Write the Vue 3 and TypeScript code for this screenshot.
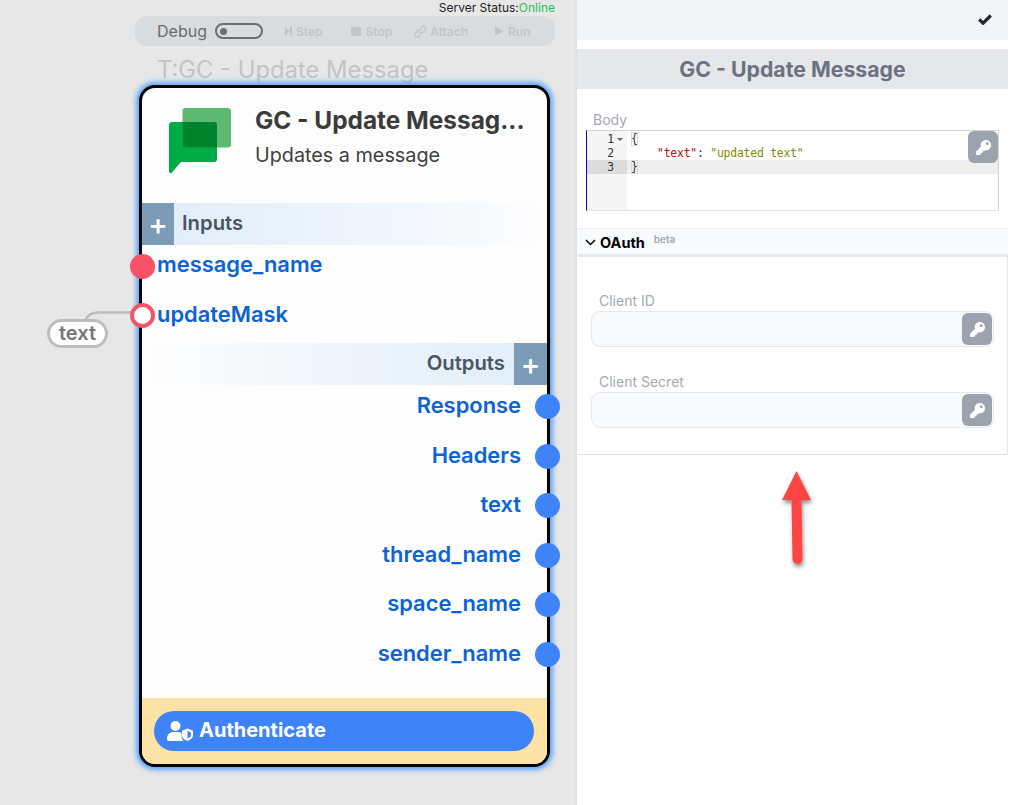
<template>
  <div class="page">
    <div class="canvas">
      <div class="server-status">Server Status:<span class="online">Online</span></div>
      <div class="toolbar">
        <span class="debug-label">Debug</span>
        <span class="toggle"><i></i></span>
        <span class="tool step">
          <svg width="7" height="9" viewBox="0 0 7 9"><path d="M0 0l4.500 4.500L0 9z" fill="currentColor" /><path d="M5 0h2v9H5z" fill="currentColor" /></svg>
          Step
        </span>
        <span class="tool stop">
          <svg width="10" height="9" viewBox="0 0 10 9"><rect width="10" height="9" rx="1" fill="currentColor" /></svg>
          Stop
        </span>
        <span class="tool attach">
          <svg width="13" height="13" viewBox="0 0 13 13" fill="none" stroke="currentColor" stroke-width="1.4">
            <path d="M5.500 7.500a2.300 2.300 0 0 0 3.300 0l2.400-2.400a2.300 2.300 0 0 0-3.300-3.300L6.800 2.900" />
            <path d="M7.500 5.500a2.300 2.300 0 0 0-3.300 0L1.800 7.900a2.300 2.300 0 0 0 3.300 3.300l1.100-1.100" />
          </svg>
          Attach
        </span>
        <span class="tool run">
          <svg width="9" height="10" viewBox="0 0 9 10"><path d="M0 0l8.500 5L0 10z" fill="currentColor" /></svg>
          Run
        </span>
      </div>
      <div class="trace-title">T:GC - Update Message</div>

      <div class="ext-input">
        <svg class="wire" width="46" height="12" viewBox="0 0 46 12" fill="none">
          <path d="M0 11 C3 6 7 3.500 13 3.500 L46 3.500" stroke="#bdbdbd" stroke-width="2.500" />
        </svg>
        <span class="pill">text</span>
      </div>

      <div class="node">
        <div class="node-head">
          <svg class="chat-logo" width="62" height="66" viewBox="0 0 62 66">
            <path d="M0 17a3 3 0 0 1 3-3h42a3 3 0 0 1 3 3v34a3 3 0 0 1-3 3H12L3 64.500c-1.500 1.500-3 .5-3-1.500z" fill="#00ac47" />
            <path d="M13.500 3a3 3 0 0 1 3-3H59a3 3 0 0 1 3 3v33.500a3 3 0 0 1-3 3H16.500a3 3 0 0 1-3-3z" fill="#5bb974" />
            <path d="M13.500 14H45a3 3 0 0 1 3 3v22.500H16.500a3 3 0 0 1-3-3z" fill="#00832d" />
          </svg>
          <div class="head-text">
            <div class="node-title">GC - Update Messag...</div>
            <div class="node-sub">Updates a message</div>
          </div>
        </div>

        <div class="band band-in">
          <span class="plus">+</span>
          <span class="band-label">Inputs</span>
        </div>
        <div class="inputs">
          <div v-for="inp in inputs" :key="inp.name" class="port-row">
            <span class="dot-in" :class="{ hollow: inp.connected }"></span>
            <span class="port-name">{{ inp.name }}</span>
          </div>
        </div>

        <div class="band band-out">
          <span class="band-label">Outputs</span>
          <span class="plus">+</span>
        </div>
        <div class="outputs">
          <div v-for="out in outputs" :key="out" class="port-row out">
            <span class="port-name">{{ out }}</span>
            <span class="dot-out"></span>
          </div>
        </div>

        <div class="node-foot">
          <button class="auth-btn">
            <svg width="26" height="20" viewBox="0 0 26 20">
              <circle cx="8.500" cy="5" r="5" fill="#fff" />
              <path d="M0 18c0-4.500 2.800-7 6.500-7h4c1.700 0 3.100.4 4.200 1.200v3.300c0 1.600.7 3.300 1.800 4.400H1.500C.6 19.900 0 19.200 0 18z" fill="#fff" />
              <path d="M20.500 7.500l5.500 2.200v4.800c0 2.600-2.500 4.500-5.500 5.400-3-.9-5.500-2.800-5.500-5.400V9.700z" fill="#fff" />
              <path d="M20.500 10l3.300 1.300v3.200c0 1.400-1.500 2.500-3.300 3.100z" fill="#3f83f8" />
            </svg>
            <span class="auth-label">Authenticate</span>
          </button>
        </div>
      </div>
    </div>

    <div class="panel">
      <div class="panel-top">
        <svg width="14" height="11" viewBox="0 0 14 11"><path d="M1.200 5.300l3.900 3.900L12.800 1.500" fill="none" stroke="#1f2937" stroke-width="3.200" /></svg>
      </div>
      <div class="panel-title">GC - Update Message</div>

      <div class="body-field">
        <div class="field-label">Body</div>
        <div class="editor">
          <div class="gutter">
            <div v-for="n in 3" :key="n" class="gutter-line" :class="{ active: n === 3 }">
              {{ n }}<span v-if="n === 1" class="fold"></span>
            </div>
          </div>
          <div class="code">
            <div class="code-line"><span class="brace">{</span></div>
            <div class="code-line indent"><span class="key">"text"</span>: <span class="str">"updated text"</span></div>
            <div class="code-line active"><span class="brace">}</span></div>
          </div>
          <span class="key-btn on-editor">
            <svg width="15" height="15" viewBox="0 0 512 512"><use href="#key-shape" /></svg>
          </span>
        </div>
      </div>

      <div class="oauth-head">
        <svg width="11" height="7" viewBox="0 0 11 7"><path d="M1 1l4.500 4.500L10 1" fill="none" stroke="#000" stroke-width="1.500" /></svg>
        <span class="oauth-label">OAuth</span>
        <sup class="beta">beta</sup>
      </div>

      <div class="oauth-body">
        <div v-for="f in oauthFields" :key="f" class="oauth-field">
          <div class="field-label">{{ f }}</div>
          <div class="oauth-input">
            <span class="key-btn">
              <svg width="15" height="15" viewBox="0 0 512 512"><use href="#key-shape" /></svg>
            </span>
          </div>
        </div>
      </div>

      <div class="arrow-wrap">
        <svg width="44" height="112" viewBox="0 0 44 112">
          <defs>
            <filter id="arrow-shadow" x="-30%" y="-10%" width="160%" height="125%">
              <feDropShadow dx="1" dy="3" stdDeviation="2" flood-color="#000" flood-opacity="0.45" />
            </filter>
          </defs>
          <path d="M21.500 3L36 32H26.500L27.500 91a5 5 0 0 1-10 0L16.500 32H7z" fill="#fd4444" filter="url(#arrow-shadow)" />
        </svg>
      </div>
    </div>

    <svg width="0" height="0" class="defs">
      <defs>
        <path id="key-shape" fill="#fff" d="M512 176c0 97.200-78.800 176-176 176-11.200 0-22.200-1.100-32.800-3.100l-24 27A24 24 0 0 1 261.200 384H224v40c0 13.300-10.700 24-24 24h-40v40c0 13.300-10.700 24-24 24H24c-13.300 0-24-10.700-24-24v-78c0-6.400 2.500-12.500 7-17l161.800-161.800C163.100 213.800 160 195.300 160 176 160 78.800 238.800 0 336 0c97.500 0 176 78.500 176 176zM336 128c0 26.500 21.500 48 48 48s48-21.500 48-48-21.500-48-48-48-48 21.500-48 48z" fill-rule="evenodd" />
      </defs>
    </svg>
  </div>
</template>

<script setup lang="ts">
const inputs = [
  { name: "message_name", connected: false },
  { name: "updateMask", connected: true },
]
const outputs = ["Response", "Headers", "text", "thread_name", "space_name", "sender_name"]
const oauthFields = ["Client ID", "Client Secret"]
</script>

<style>
html,
body {
  margin: 0;
  background: #fff;
}
</style>

<style scoped>
.page {
  display: flex;
  width: 1011px;
  height: 805px;
  overflow: hidden;
  font-family: Inter, "Liberation Sans", sans-serif;
}
.defs {
  position: absolute;
}
.canvas {
  position: relative;
  width: 575px;
  flex: none;
  background: #e7e7e7;
}
.server-status {
  position: absolute;
  top: 1px;
  right: 20px;
  font-size: 12px;
  line-height: 14px;
  color: #222;
}
.online {
  color: #22c55e;
}
.toolbar {
  position: absolute;
  left: 135px;
  top: 16px;
  width: 420px;
  height: 30px;
  box-sizing: border-box;
  padding-left: 22px;
  display: flex;
  align-items: center;
  background: #d9dcdf;
  border-radius: 12px;
}
.debug-label {
  font-size: 16px;
  color: #6b6b6b;
}
.toggle {
  margin-left: 8px;
  width: 48px;
  height: 16px;
  box-sizing: border-box;
  border: 2px solid #6e6e6e;
  border-radius: 8px;
  display: flex;
  align-items: center;
  padding-left: 3px;
}
.toggle i {
  width: 7px;
  height: 7px;
  border-radius: 50%;
  background: #6e6e6e;
}
.tool {
  display: flex;
  align-items: center;
  gap: 4px;
  font-size: 12px;
  font-weight: 600;
  color: #c4c5c7;
}
.step {
  margin-left: 22px;
}
.stop {
  margin-left: 29px;
}
.attach {
  margin-left: 22px;
  gap: 3px;
}
.run {
  margin-left: 27px;
}
.trace-title {
  position: absolute;
  left: 157px;
  top: 56px;
  font-size: 23.800px;
  line-height: 27px;
  color: #c4c4c4;
}
.ext-input {
  position: absolute;
  left: 47px;
  top: 309px;
}
.wire {
  position: absolute;
  left: 38px;
  top: 0;
}
.pill {
  position: absolute;
  top: 10px;
  left: 0;
  width: 61px;
  height: 29px;
  box-sizing: border-box;
  border: 3px solid #bdbdbd;
  border-radius: 15px;
  background: #fff;
  font-size: 20px;
  font-weight: 600;
  line-height: 23px;
  text-align: center;
  color: #757575;
}
.node {
  position: absolute;
  left: 139px;
  top: 85px;
  width: 411px;
  height: 682px;
  box-sizing: border-box;
  display: flex;
  flex-direction: column;
  background: #fdfdfd;
  border: 3px solid #000;
  border-radius: 16px;
  box-shadow: 0 0 5px 2.500px #60a5fa;
}
.node-head {
  height: 115px;
  flex: none;
  display: flex;
  padding: 20px 0 0 27px;
  box-sizing: border-box;
}
.chat-logo {
  flex: none;
}
.head-text {
  margin-left: 24px;
  margin-top: -4px;
}
.node-title {
  font-size: 24.400px;
  line-height: 32px;
  font-weight: 700;
  color: #3b3b3b;
  white-space: nowrap;
}
.node-sub {
  margin-top: 7px;
  font-size: 19.800px;
  line-height: 24px;
  color: #404040;
}
.band {
  height: 42px;
  flex: none;
  display: flex;
  align-items: center;
}
.band-in {
  background: linear-gradient(90deg, #dfedf9, #f7fafd 85%, #fdfdfd);
}
.band-in .plus {
  width: 32px;
}
.band-out {
  justify-content: flex-end;
  background: linear-gradient(90deg, #fdfdfd, #dfedf9);
}
.plus {
  width: 33px;
  height: 42px;
  flex: none;
  background: #7b9bb6;
  color: #fff;
  font-size: 30px;
  line-height: 42px;
  text-align: center;
  font-weight: 500;
}
.band-label {
  margin: 0 9px 4px 8px;
  font-size: 20.300px;
  font-weight: 600;
  color: #4b5563;
}
.inputs {
  height: 98px;
  flex: none;
  box-sizing: border-box;
}
.inputs .port-row {
  top: -3.500px;
}
.port-row {
  position: relative;
  height: 49.500px;
  display: flex;
  align-items: center;
  font-size: 21.900px;
  font-weight: 600;
  color: #0b63d6;
}
.port-name {
  margin-left: 15px;
  margin-bottom: 4.500px;
}
.port-row.out {
  justify-content: flex-end;
  top: -3px;
}
.port-row.out .port-name {
  margin: 0 26px 3.500px 0;
}
.dot-in {
  position: absolute;
  left: -12.500px;
  top: 12px;
  width: 25px;
  height: 25px;
  box-sizing: border-box;
  border-radius: 50%;
  background: #f75266;
}
.dot-in.hollow {
  background: #fff;
  border: 4px solid #f75266;
}
.dot-out {
  position: absolute;
  right: -13px;
  top: 12px;
  width: 25px;
  height: 25px;
  border-radius: 50%;
  background: #3f83f8;
}
.outputs {
  flex: 1;
}
.node-foot {
  height: 66px;
  flex: none;
  display: flex;
  align-items: center;
  padding: 0 13px 0 12px;
  background: #fde4a6;
  border-radius: 0 0 13px 13px;
}
.auth-btn {
  width: 100%;
  height: 40px;
  border: 0;
  border-radius: 20px;
  background: #3f83f8;
  color: #fff;
  font: 700 20px Inter, "Liberation Sans", sans-serif;
  display: flex;
  align-items: center;
  gap: 6px;
  padding: 0 0 0 13px;
}
.auth-label {
  margin-bottom: 2px;
}
.panel {
  flex: 1;
  position: relative;
  background: #fff;
  display: flex;
  flex-direction: column;
  border-left: 2px solid #dfe2e6;
  padding-right: 3px;
}
.panel-top {
  height: 40px;
  flex: none;
  box-sizing: border-box;
  background: #f3f4f6;
  display: flex;
  align-items: center;
  justify-content: flex-end;
  padding: 0 16px 2px 0;
}
.panel-title {
  margin-top: 9px;
  height: 40px;
  flex: none;
  background: #e5e7eb;
  font-size: 21.250px;
  font-weight: 700;
  line-height: 40px;
  text-align: center;
  color: #6b7280;
}
.body-field {
  padding: 21px 9px 0 9px;
  height: 139px;
  box-sizing: border-box;
  flex: none;
}
.field-label {
  margin-left: 7px;
  font-size: 14px;
  line-height: 20px;
  color: #a3a8b3;
}
.editor {
  position: relative;
  height: 81px;
  box-sizing: border-box;
  display: flex;
  border: 1px solid #d4d4d4;
  border-left: 1px solid #0000d0;
  border-bottom-color: #e5e5e5;
  font: 11.400px/14px "DejaVu Sans Mono", monospace;
  letter-spacing: -0.2px;
  color: #333;
}
.gutter {
  width: 40px;
  flex: none;
  padding-top: 1px;
  background: #f5f5f5;
  text-align: right;
  box-sizing: border-box;
}
.gutter-line {
  position: relative;
  height: 14px;
  padding-right: 13px;
}
.gutter-line.active {
  background: #dcdcdc;
}
.fold {
  position: absolute;
  right: 4px;
  top: 6px;
  border: 3px solid transparent;
  border-top-color: #666;
  border-bottom: 0;
}
.code {
  flex: 1;
  padding-top: 1px;
}
.code-line {
  height: 14px;
  padding-left: 4px;
  white-space: pre;
}
.code-line.indent {
  padding-left: 30px;
}
.code-line.active {
  background: #efefef;
}
.brace {
  outline: 1px solid #d8d8d8;
  outline-offset: -1px;
}
.key {
  color: #c5060b;
}
.str {
  color: #7f8a00;
}
.key-btn {
  width: 30px;
  height: 32px;
  border-radius: 6px;
  background: #9ca3af;
  display: flex;
  align-items: center;
  justify-content: center;
}
.key-btn.on-editor {
  position: absolute;
  right: 0;
  top: 0;
}
.oauth-head {
  height: 26px;
  flex: none;
  box-sizing: border-box;
  display: flex;
  align-items: center;
  padding: 2px 0 0 8px;
  background: #f9fafb;
  border-top: 1px solid #f0f1f3;
}
.oauth-label {
  margin-left: 4px;
  font-size: 14.500px;
  font-weight: 700;
  color: #000;
}
.beta {
  margin: -7px 0 0 9px;
  font-size: 10px;
  font-weight: 600;
  color: #a3a8b3;
}
.oauth-body {
  height: 201px;
  flex: none;
  box-sizing: border-box;
  padding: 35px 13px 0 13px;
  border-top: 3px solid #e5e7eb;
  border-bottom: 1px solid #e0e0e0;
  border-right: 1px solid #e5e7eb;
  margin-left: 1px;
}
.oauth-field {
  margin-bottom: 26px;
}
.oauth-field .field-label {
  margin-left: 8px;
  margin-bottom: 1px;
  line-height: 18px;
}
.oauth-input {
  height: 36px;
  box-sizing: border-box;
  display: flex;
  align-items: center;
  justify-content: flex-end;
  padding-right: 1px;
  background: #f9fafb;
  border: 1px solid #e5e7eb;
  border-radius: 9px;
}
.arrow-wrap {
  margin-top: 13px;
  margin-left: 198px;
}
</style>
